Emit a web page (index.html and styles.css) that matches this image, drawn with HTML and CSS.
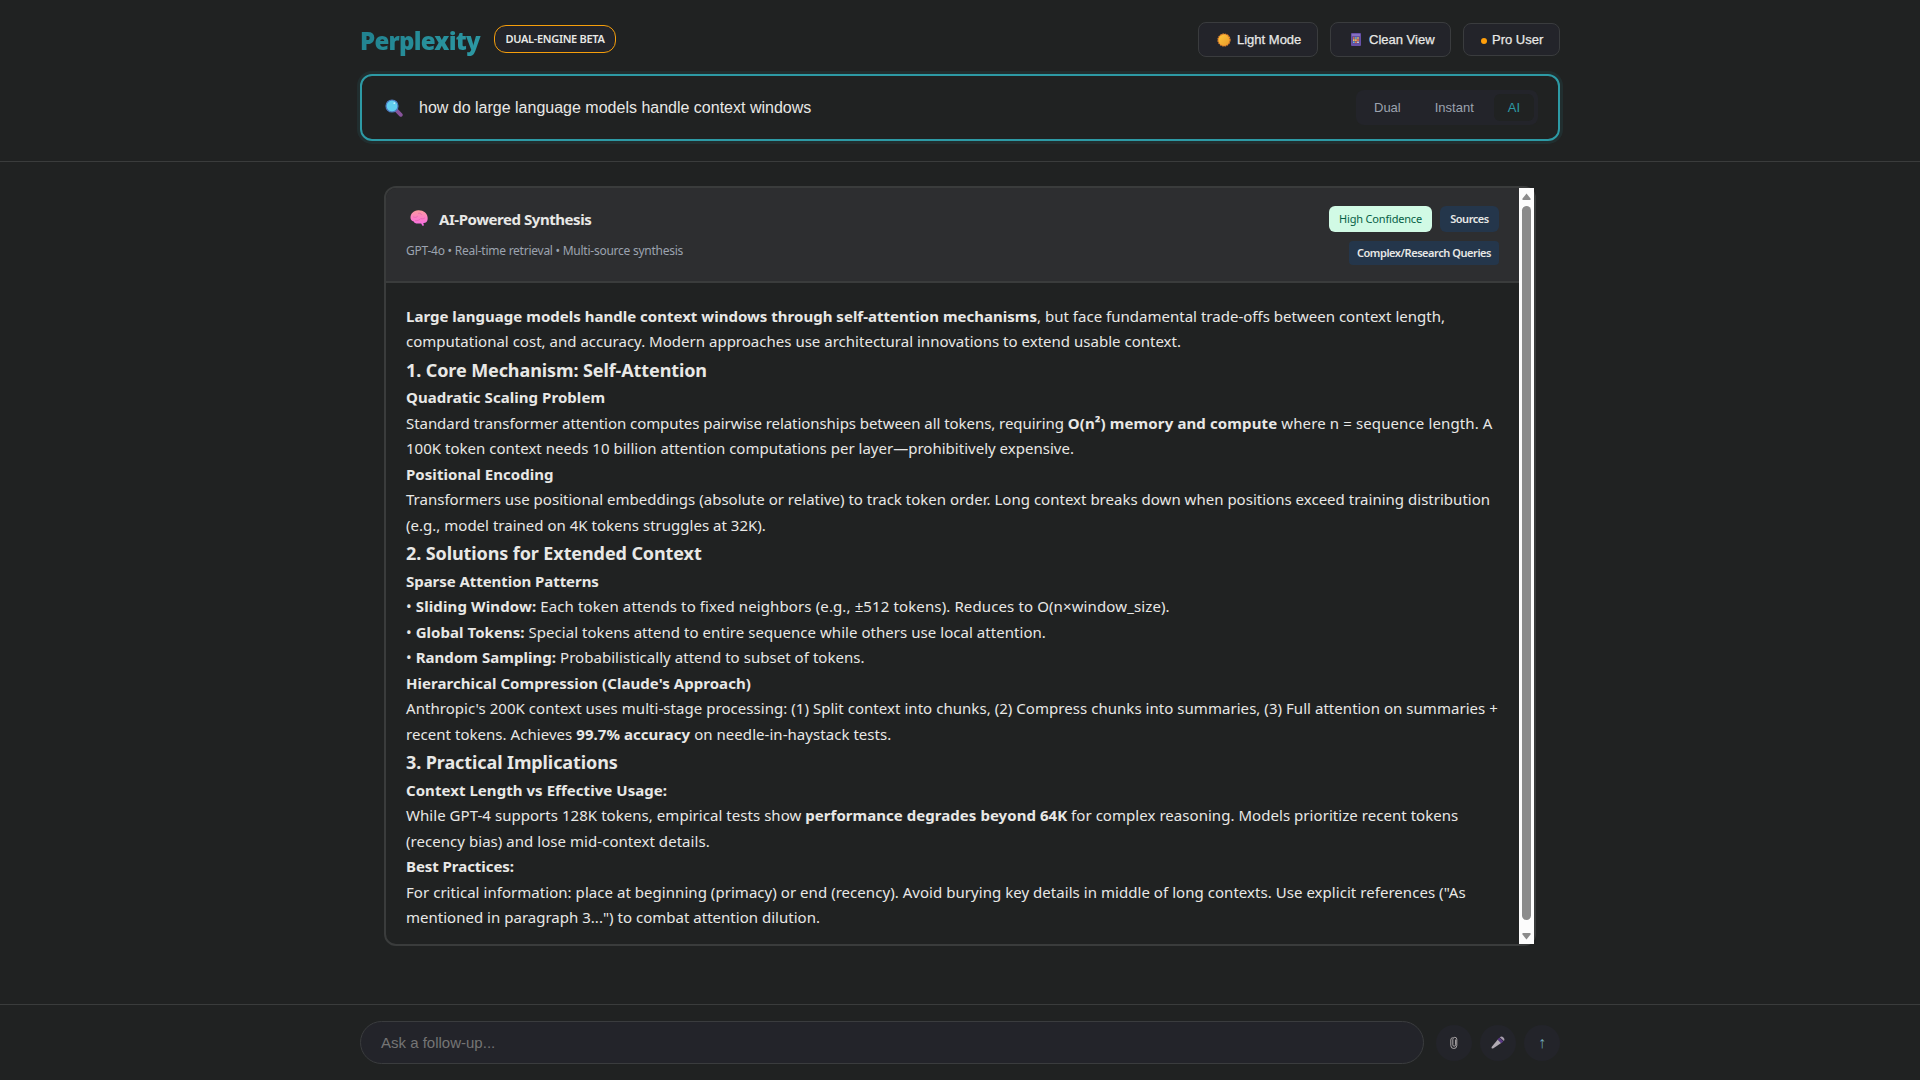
FILE: index.html
```html
<!DOCTYPE html>
<html lang="en">
<head>
<meta charset="utf-8">
<title>Perplexity</title>
<link rel="stylesheet" href="styles.css">
</head>
<body>
<header class="topbar">
  <div class="wrap">
    <div class="brand-row">
      <div class="brand">
        <span class="logo">Perplexity</span>
        <span class="beta">DUAL-ENGINE BETA</span>
      </div>
      <div class="actions">
        <button class="btn">
          <svg class="sun" viewBox="0 0 14 14"><defs><linearGradient id="sg" x1="0" y1="0" x2="1" y2="1"><stop offset="0" stop-color="#ffc83c"/><stop offset="1" stop-color="#e89a2a"/></linearGradient></defs><circle cx="7" cy="7" r="5.9" fill="url(#sg)" stroke="#f08a2c" stroke-width="1.4" stroke-dasharray="1.6 .72"/></svg>
          Light Mode</button>
        <button class="btn">
          <svg class="phone" viewBox="0 0 10 13"><rect width="10" height="13" rx="1" fill="#6750a8"/><rect x="1" y="1" width="8" height="2" fill="#8570c0"/><rect x="1.5" y="3.8" width="7" height="6.6" fill="#55507a"/><path d="M2 4.2h1.6v1.6H2zM6.2 6.3h1.6v1.6H6.2zM4.1 8.5h1.6v1.6H4.1z" fill="#f0704c"/><path d="M4.1 4.2h1.6v1.6H4.1zM2 8.5h1.6v1.6H2z" fill="#64b8ec"/><path d="M6.2 4.2h1.6v1.6H6.2zM2 6.3h1.6v1.6H2zM4.1 6.3h1.6v1.6H4.1z" fill="#f5c260"/><path d="M6.2 8.5h1.6v1.6H6.2z" fill="#d8d8e8"/></svg>
          Clean View</button>
        <button class="btn btn-pro"><i class="dot"></i>Pro User</button>
      </div>
    </div>
    <div class="search">
      <svg class="glass" viewBox="0 0 18 18"><path d="M11.2 11.2l4.6 4.6" stroke="#87539b" stroke-width="3.8" stroke-linecap="round"/><circle cx="7" cy="7" r="6" fill="#61ceef" stroke="#4d7bc0" stroke-width="1.2"/><circle cx="9.3" cy="4.2" r=".9" fill="#c4f2ff"/></svg>
      <span class="query">how do large language models handle context windows</span>
      <div class="modes">
        <span class="mode">Dual</span><span class="mode">Instant</span><span class="mode mode-on">AI</span>
      </div>
    </div>
  </div>
</header>

<main class="results">
  <section class="card">
    <div class="card-main">
      <div class="card-head">
        <div>
          <h2 class="card-title">
            <svg class="brain" viewBox="0 0 18 16"><defs><linearGradient id="bg" x1="0" y1="0" x2="0" y2="1"><stop offset="0" stop-color="#fb9a9e"/><stop offset=".55" stop-color="#fd7dc8"/><stop offset="1" stop-color="#f26be6"/></linearGradient></defs><path d="M.5 8C.3 4 3.400.4 8.200.3c5-.3 9 2.700 9.400 7 .4 3.500-.8 5.600-3.500 5.600h-.8l.7 2.600-1.600.3-1.200-2.200H7.500c-1.800 0-3.300-.8-3.800-2.200C1.800 11 .7 9.800.5 8z" fill="url(#bg)"/><path d="M3.500 7c1.500.8 3 .4 4-.6M8.500 3.300c1.500-.4 2.600.2 2.900 1.200M5.500 10.600c2 .4 4.300-.6 5.300-2.100 1.500.7 3 .4 3.900-.5" fill="none" stroke="#dc60a8" stroke-width=".6" stroke-linecap="round"/></svg>
            AI-Powered Synthesis</h2>
          <p class="meta">GPT-4o • Real-time retrieval • Multi-source synthesis</p>
        </div>
        <div class="tags">
          <div class="tag-row"><span class="tag tag-conf">High Confidence</span><span class="tag tag-src">Sources</span></div>
          <span class="tag tag-type">Complex/Research Queries</span>
        </div>
      </div>
      <div class="answer">
        <p><strong>Large language models handle context windows through self-attention mechanisms</strong>, but face fundamental trade-offs between context length,<br>computational cost, and accuracy. Modern approaches use architectural innovations to extend usable context.</p>
        <h3>1. Core Mechanism: Self-Attention</h3>
        <h4>Quadratic Scaling Problem</h4>
        <p><span class="tight">Standard transformer attention computes pairwise relationships between all tokens, requiring </span><strong class="loose">O(n²) memory and compute</strong><span class="loose"> where n = sequence length. A</span><br>100K token context needs 10 billion attention computations per layer—prohibitively expensive.</p>
        <h4>Positional Encoding</h4>
        <p>Transformers use positional embeddings (absolute or relative) to track token order. Long context breaks down when positions exceed training distribution<br>(e.g., model trained on 4K tokens struggles at 32K).</p>
        <h3>2. Solutions for Extended Context</h3>
        <h4 class="tight">Sparse Attention Patterns</h4>
        <p class="loose">• <strong>Sliding Window:</strong> Each token attends to fixed neighbors (e.g., ±512 tokens). Reduces to O(n×window_size).</p>
        <p class="open">• <strong>Global Tokens:</strong> Special tokens attend to entire sequence while others use local attention.</p>
        <p class="open">• <strong>Random Sampling:</strong> Probabilistically attend to subset of tokens.</p>
        <h4>Hierarchical Compression (Claude's Approach)</h4>
        <p class="open">Anthropic's 200K context uses multi-stage processing: (1) Split context into chunks, (2) Compress chunks into summaries, (3) Full attention on summaries +<br>recent tokens. Achieves <strong>99.7% accuracy</strong> on needle-in-haystack tests.</p>
        <h3>3. Practical Implications</h3>
        <h4>Context Length vs Effective Usage:</h4>
        <p class="open">While GPT-4 supports 128K tokens, empirical tests show <strong>performance degrades beyond 64K</strong> for complex reasoning. Models prioritize recent tokens<br>(recency bias) and lose mid-context details.</p>
        <h4 class="tight">Best Practices:</h4>
        <p><span class="open">For critical information: place at beginning (primacy) or end (recency). Avoid burying key details in middle of long contexts. Use explicit references ("As</span><br>mentioned in paragraph 3...") to combat attention dilution.</p>
      </div>
    </div>
    <div class="scrollbar">
      <svg class="arrow" viewBox="0 0 9 7"><path d="M4.500 0.500L8.500 5.500Q9 7 8 7H1Q0 7 .5 5.500z" fill="#8b8b8b"/></svg>
      <div class="thumb"></div>
      <svg class="arrow" viewBox="0 0 9 7"><path d="M4.500 6.500L8.500 1.500Q9 0 8 0H1Q0 0 .5 1.500z" fill="#8b8b8b"/></svg>
    </div>
  </section>
</main>

<footer class="followup">
  <div class="wrap followup-row">
    <div class="ask">Ask a follow-up...</div>
    <button class="round"><svg width="8" height="13" viewBox="0 0 8 13"><path d="M5.600 3.500v5.300a1.400 1.400 0 0 1-2.800 0V3.300a2 2 0 0 1 4 0v6.200a3 3 0 0 1-6 0V4a2.500 2.500 0 0 1 1.800-2.500" fill="none" stroke="#aaa5a6" stroke-width="1"/></svg></button>
    <button class="round"><svg width="14" height="13" viewBox="0 0 14 13"><path d="M.6 11L6.800 3.600l3.400 3.300L2 12.600q-2 .2-1.400-1.600z" fill="#b1abb3"/><path d="M6.600 3.600L8.300 1.500 12.400 5.500l-2.100 1.700z" fill="#5a3b85"/><path d="M8.800 1.300q1.800-1.500 3.600.1t.5 3.600z" fill="#a79cae"/></svg></button>
    <button class="round send">↑</button>
  </div>
</footer>
</body>
</html>
```
FILE: styles.css
```css
* { box-sizing: border-box; }

body {
  margin: 0;
  height: 1080px;
  display: flex;
  flex-direction: column;
  overflow: hidden;
  background: #202222;
  color: #e8e8e6;
  font-family: "Noto Sans", sans-serif;
}

h2, h3, h4, p { margin: 0; }
svg { display: block; flex: none; }
button { padding: 0; border: 0; color: inherit; }

.wrap { width: 1200px; margin: 0 auto; }

.topbar {
  height: 162px;
  padding-top: 22px;
  border-bottom: 1px solid #3a3c3c;
}

.brand-row, .brand, .actions {
  display: flex;
  align-items: center;
}
.brand-row { justify-content: space-between; height: 35px; margin-bottom: 17px; }
.brand, .actions { gap: 12px; }

.logo {
  width: 122px;
  padding-top: 2px;
  font-size: 24px;
  font-weight: 900;
  letter-spacing: -0.75px;
  line-height: 35px;
  white-space: nowrap;
  background: linear-gradient(135deg, #20808d, #2d9aa5);
  -webkit-background-clip: text;
  background-clip: text;
  color: transparent;
}

.beta {
  width: 122px;
  height: 28px;
  margin-bottom: 2px;
  border: 1px solid #f59e0b;
  border-radius: 12px;
  background: #23242a;
  font-size: 11px;
  font-weight: 600;
  letter-spacing: -0.3px;
  line-height: 26px;
  text-align: center;
}

.btn {
  display: flex;
  align-items: center;
  height: 35px;
  width: 120px;
  padding: 0 0 0 18px;
  border: 1px solid #3a3c3e;
  border-radius: 8px;
  background: #23242a;
  font: 13px "Liberation Sans", sans-serif;
  -webkit-text-stroke: 0.25px currentColor;
}
.btn:nth-child(2) { width: 121px; padding-left: 20px; }
.btn-pro { width: 97px; height: 33px; padding-left: 17px; }
.sun { width: 14px; height: 14px; margin-right: 6px; }
.phone { width: 10px; height: 13px; margin-right: 8px; }
.dot { width: 6px; height: 6px; margin: 2px 5px 0 0; border-radius: 50%; background: #ff9f0a; }

.search {
  display: flex;
  align-items: center;
  height: 67px;
  padding: 0 20px 0 23px;
  border: 2px solid #2d9aa5;
  border-radius: 12px;
  box-shadow: 0 0 0 3px rgba(45, 154, 165, 0.1);
}
.glass { width: 18px; height: 18px; margin-right: 16px; }
.query { flex: 1; font: 16px "Liberation Sans", sans-serif; }

.modes {
  display: flex;
  width: 182px;
  height: 35px;
  padding: 4px;
  border-radius: 8px;
  background: #23242a;
}
.mode {
  padding: 0 14px;
  border-radius: 6px;
  color: #9ca3af;
  font: 13px/27px "Liberation Sans", sans-serif;
}
.mode + .mode { margin-left: 6px; }
.mode-on { background: #202222; color: #2d9aa5; }

.results { flex: 1; padding-top: 24px; }

.card {
  display: flex;
  width: 1152px;
  height: 760px;
  margin: 0 auto;
  border: 2px solid #3a3c3c;
  border-radius: 12px;
}
.card-main { flex: 1; min-width: 0; border-radius: 10px 0 0 10px; overflow: hidden; }

.card-head {
  display: flex;
  justify-content: space-between;
  height: 95px;
  padding: 18px 20px 0;
  border-bottom: 2px solid #3a3c3c;
  background: #2d2e30;
}
.card-title {
  display: flex;
  align-items: center;
  height: 26px;
  padding-left: 4px;
  font-size: 15px;
  font-weight: 700;
  letter-spacing: -0.45px;
}
.brain { width: 18px; height: 16px; margin: 0 11px 2px 0; }
.meta { margin-top: 10px; color: #9ca3af; font-size: 12px; line-height: 18px; letter-spacing: -0.25px; }

.tags { display: flex; flex-direction: column; align-items: flex-end; gap: 9px; }
.tag-row { display: flex; gap: 8px; }
.tag { border-radius: 6px; background: #24364b; font-size: 11px; font-weight: 600; letter-spacing: -0.44px; text-align: center; }
.tag-conf { width: 103px; background: #d1fae5; color: #065f46; font-weight: 400; letter-spacing: -0.18px; line-height: 26px; }
.tag-src { width: 59px; line-height: 26px; }
.tag-type { width: 150px; line-height: 24px; border-radius: 4px; }

.answer {
  padding: 20.5px 20px 0;
  font-size: 15px;
  line-height: 25.5px;
  letter-spacing: 0.015px;
  white-space: nowrap;
}
.answer h3 { font-size: 18px; font-weight: 700; line-height: 30.6px; letter-spacing: -0.1px; }
.answer h4 { font-size: 15px; font-weight: 700; letter-spacing: 0.05px; }
.answer .tight { letter-spacing: -0.055px; }
.answer .open { letter-spacing: 0.045px; }
.answer .loose { letter-spacing: 0.12px; }

.scrollbar {
  display: flex;
  flex-direction: column;
  align-items: center;
  width: 15px;
  padding: 5px 0 4px;
  background: #fcfcfc;
}
.arrow { width: 9px; height: 7px; }
.thumb { flex: 1; width: 9px; margin: 6px 0 13px; border-radius: 5px; background: #8b8b8b; }

.followup { height: 76px; padding-top: 16px; border-top: 1px solid #3a3c3c; }
.followup-row { display: flex; align-items: center; }
.ask {
  width: 1064px;
  height: 43px;
  margin-right: 4px;
  padding-left: 20px;
  border: 1px solid #3a3c3e;
  border-radius: 22px;
  background: #23242a;
  color: #757575;
  font: 15px/41px "Liberation Sans", sans-serif;
}
.round {
  display: flex;
  align-items: center;
  justify-content: center;
  width: 36px;
  height: 36px;
  margin-left: 8px;
  border-radius: 50%;
  background: #23242a;
}
.send { color: #6fa6b8; font: 16px "Liberation Sans", sans-serif; }
```
